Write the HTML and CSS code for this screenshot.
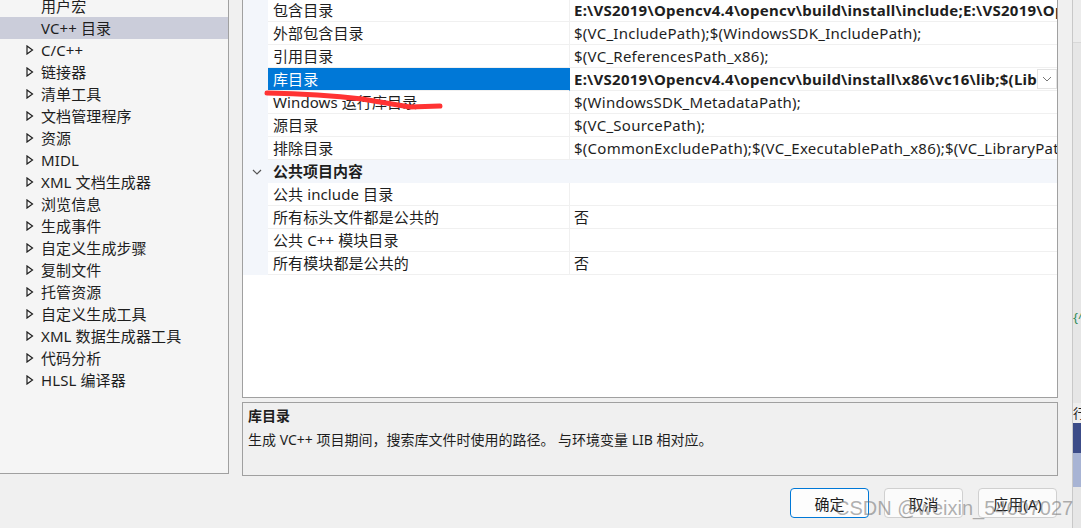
FILE: index.html
```html
<!DOCTYPE html>
<html lang="zh-CN">
<head>
<meta charset="utf-8">
<title>属性页</title>
<link rel="stylesheet" href="styles.css">
</head>
<body>
<div class="window">
  <div class="main">
    <div class="top">
      <div class="tree">
        <ul class="tree-list">
          <li class="node leaf">用户宏</li>
          <li class="node leaf selected">VC++ 目录</li>
          <li class="node"><svg class="tri" width="8" height="10" viewBox="0 0 8 10"><polygon points="1,1 6.5,5 1,9" /></svg>C/C++</li>
          <li class="node"><svg class="tri" width="8" height="10" viewBox="0 0 8 10"><polygon points="1,1 6.5,5 1,9" /></svg>链接器</li>
          <li class="node"><svg class="tri" width="8" height="10" viewBox="0 0 8 10"><polygon points="1,1 6.5,5 1,9" /></svg>清单工具</li>
          <li class="node"><svg class="tri" width="8" height="10" viewBox="0 0 8 10"><polygon points="1,1 6.5,5 1,9" /></svg>文档管理程序</li>
          <li class="node"><svg class="tri" width="8" height="10" viewBox="0 0 8 10"><polygon points="1,1 6.5,5 1,9" /></svg>资源</li>
          <li class="node"><svg class="tri" width="8" height="10" viewBox="0 0 8 10"><polygon points="1,1 6.5,5 1,9" /></svg>MIDL</li>
          <li class="node"><svg class="tri" width="8" height="10" viewBox="0 0 8 10"><polygon points="1,1 6.5,5 1,9" /></svg>XML 文档生成器</li>
          <li class="node"><svg class="tri" width="8" height="10" viewBox="0 0 8 10"><polygon points="1,1 6.5,5 1,9" /></svg>浏览信息</li>
          <li class="node"><svg class="tri" width="8" height="10" viewBox="0 0 8 10"><polygon points="1,1 6.5,5 1,9" /></svg>生成事件</li>
          <li class="node"><svg class="tri" width="8" height="10" viewBox="0 0 8 10"><polygon points="1,1 6.5,5 1,9" /></svg>自定义生成步骤</li>
          <li class="node"><svg class="tri" width="8" height="10" viewBox="0 0 8 10"><polygon points="1,1 6.5,5 1,9" /></svg>复制文件</li>
          <li class="node"><svg class="tri" width="8" height="10" viewBox="0 0 8 10"><polygon points="1,1 6.5,5 1,9" /></svg>托管资源</li>
          <li class="node"><svg class="tri" width="8" height="10" viewBox="0 0 8 10"><polygon points="1,1 6.5,5 1,9" /></svg>自定义生成工具</li>
          <li class="node"><svg class="tri" width="8" height="10" viewBox="0 0 8 10"><polygon points="1,1 6.5,5 1,9" /></svg>XML 数据生成器工具</li>
          <li class="node"><svg class="tri" width="8" height="10" viewBox="0 0 8 10"><polygon points="1,1 6.5,5 1,9" /></svg>代码分析</li>
          <li class="node"><svg class="tri" width="8" height="10" viewBox="0 0 8 10"><polygon points="1,1 6.5,5 1,9" /></svg>HLSL 编译器</li>
        </ul>
      </div>
      <div class="right">
        <div class="grid">
          <div class="rows">
            <div class="row"><div class="gutter"></div><div class="name">包含目录</div><div class="value bold">E:\VS2019\Opencv4.4\opencv\build\install\include;E:\VS2019\Opencv4.4\opencv\build\install\include\opencv2;$(IncludePath)</div></div>
            <div class="row"><div class="gutter"></div><div class="name">外部包含目录</div><div class="value">$(VC_IncludePath);$(WindowsSDK_IncludePath);</div></div>
            <div class="row"><div class="gutter"></div><div class="name">引用目录</div><div class="value">$(VC_ReferencesPath_x86);</div></div>
            <div class="row active"><div class="gutter"></div><div class="name">库目录</div><div class="value bold"><span class="vtext">E:\VS2019\Opencv4.4\opencv\build\install\x86\vc16\lib;$(LibraryPath)</span><span class="drop"><svg width="10" height="6" viewBox="0 0 10 6"><polyline points="1,1 5,5 9,1" /></svg></span></div></div>
            <div class="row"><div class="gutter"></div><div class="name">Windows 运行库目录</div><div class="value">$(WindowsSDK_MetadataPath);</div></div>
            <div class="row"><div class="gutter"></div><div class="name">源目录</div><div class="value">$(VC_SourcePath);</div></div>
            <div class="row"><div class="gutter"></div><div class="name">排除目录</div><div class="value">$(CommonExcludePath);$(VC_ExecutablePath_x86);$(VC_LibraryPath_x86)</div></div>
            <div class="row category"><div class="gutter"><svg width="10" height="6" viewBox="0 0 10 6"><polyline points="1,1 5,5 9,1" /></svg></div><div class="cat-name">公共项目内容</div></div>
            <div class="row"><div class="gutter"></div><div class="name">公共 include 目录</div><div class="value"></div></div>
            <div class="row"><div class="gutter"></div><div class="name">所有标头文件都是公共的</div><div class="value">否</div></div>
            <div class="row"><div class="gutter"></div><div class="name">公共 C++ 模块目录</div><div class="value"></div></div>
            <div class="row"><div class="gutter"></div><div class="name">所有模块都是公共的</div><div class="value">否</div></div>
          </div>
        </div>
        <div class="desc">
          <div class="desc-title">库目录</div>
          <div class="desc-text">生成 VC++ 项目期间，搜索库文件时使用的路径。 与环境变量 LIB 相对应。</div>
        </div>
      </div>
    </div>
    <div class="buttons">
      <button class="btn default">确定</button>
      <button class="btn">取消</button>
      <button class="btn">应用(A)</button>
    </div>
  </div>
  <div class="bgwin">
    <div class="bg-top"></div>
    <div class="bg-code">{^</div>
    <div class="bg-line">行</div>
    <div class="bg-dark"></div>
    <div class="bg-light"></div>
  </div>
</div>
<svg class="scribble" width="1081" height="528" viewBox="0 0 1081 528"><path d="M267,93 Q320,94 362,99 Q392,104 410,107 L440,106" /></svg>
<div class="watermark">CSDN @weixin_54607027</div>
</body>
</html>
```

FILE: styles.css
```css
* { box-sizing: border-box; }
html, body {
  margin: 0;
  padding: 0;
}
body {
  width: 1081px;
  height: 528px;
  overflow: hidden;
  background: #f0f0f0;
  font-family: "Noto Sans", "Noto Sans CJK SC", sans-serif;
  font-size: 15px;
  color: #1e1e1e;
  position: relative;
}
.window {
  display: flex;
  height: 528px;
}
.main {
  width: 1072px;
  display: flex;
  flex-direction: column;
}
.top {
  display: flex;
  height: 476px;
}
.tree {
  width: 229px;
  height: 474px;
  background: #f5f5f5;
  border-right: 1px solid #a0a0a0;
  border-bottom: 1px solid #a0a0a0;
  overflow: hidden;
}
.tree-list {
  list-style: none;
  margin: -5px 0 0 0;
  padding: 0;
}
.node {
  height: 22px;
  line-height: 22px;
  display: flex;
  align-items: center;
  padding-left: 26px;
  white-space: nowrap;
  letter-spacing: 0.1px;
}
.node.leaf { padding-left: 41px; }
.node.selected { background: #cbcdda; }
.tri {
  margin-right: 7px;
  flex: none;
}
.tri polygon {
  fill: none;
  stroke: #1e1e1e;
  stroke-width: 1.2;
}
.right {
  margin-left: 13px;
  width: 816px;
  display: flex;
  flex-direction: column;
}
.grid {
  height: 398px;
  background: #ffffff;
  border-left: 1px solid #a0a0a0;
  border-right: 1px solid #a0a0a0;
  border-bottom: 1px solid #a0a0a0;
  overflow: hidden;
}
.rows { margin-top: -1px; }
.row {
  display: flex;
  height: 23px;
  line-height: 22px;
}
.gutter {
  width: 25px;
  flex: none;
  background: #f3f6fb;
  display: flex;
  align-items: center;
  padding-left: 9px;
}
.gutter polyline, .drop polyline {
  fill: none;
  stroke: #555;
  stroke-width: 1.2;
}
.name {
  width: 302px;
  flex: none;
  padding-left: 5px;
  border-right: 1px solid #f0f0f0;
  border-bottom: 1px solid #f0f0f0;
  white-space: nowrap;
  overflow: hidden;
  letter-spacing: 0.1px;
}
.value {
  flex: 1;
  min-width: 0;
  padding-left: 4px;
  border-bottom: 1px solid #f0f0f0;
  white-space: nowrap;
  overflow: hidden;
  display: flex;
  letter-spacing: 0.25px;
}
.bold { font-weight: 700; }
.vtext {
  flex: 1;
  min-width: 0;
  overflow: hidden;
}
.row.active .name {
  background: #0078d7;
  color: #ffffff;
  border-right-color: #0078d7;
}
.drop {
  flex: none;
  width: 20px;
  height: 20px;
  margin-top: 1px;
  border: 1px solid #e3e3e3;
  background: #fff;
  display: flex;
  align-items: center;
  justify-content: center;
}
.drop polyline { stroke: #777; stroke-width: 1; }
.row.category {
  background: #f3f6fb;
}
.cat-name {
  padding-left: 5px;
  font-weight: 700;
}
.desc {
  margin-top: 4px;
  height: 74px;
  border: 1px solid #a0a0a0;
  background: #f0f0f0;
  padding: 2px 5px;
  font-size: 14px;
}
.desc-title {
  font-weight: 700;
  line-height: 22px;
}
.desc-text {
  margin-top: 2px;
  line-height: 22px;
}
.buttons {
  display: flex;
  justify-content: flex-end;
  gap: 15px;
  padding-top: 12px;
  padding-right: 15px;
}
.btn {
  width: 79px;
  height: 30px;
  font-family: "Noto Sans", "Noto Sans CJK SC", sans-serif;
  font-size: 15px;
  color: #1e1e1e;
  background: #fbfbfb;
  border: 1px solid #d0d0d0;
  border-radius: 4px;
  padding: 0;
}
.btn.default {
  border: 1px solid #0078d7;
  background: #fdfdfd;
}
.bgwin {
  width: 9px;
  border-left: 1px solid #c8c8c8;
  background: #e6e6e6;
  display: flex;
  flex-direction: column;
  overflow: hidden;
}
.bg-top {
  height: 43px;
  background: #ececec;
  border-bottom: 1px solid #d8d8d8;
}
.bg-code {
  margin-top: 264px;
  height: 20px;
  font-size: 13px;
  line-height: 20px;
  color: #2e8b57;
  white-space: nowrap;
}
.bg-line {
  margin-top: 76px;
  height: 20px;
  font-size: 13px;
  line-height: 20px;
  background: #eeeeee;
  white-space: nowrap;
}
.bg-dark {
  height: 30px;
  background: #3c4c88;
}
.bg-light {
  height: 34px;
  background: #a8b4d4;
}
.scribble {
  position: absolute;
  left: 0;
  top: 0;
  pointer-events: none;
}
.scribble path {
  fill: none;
  stroke: #ff3333;
  stroke-width: 5;
  stroke-linecap: round;
  stroke-linejoin: round;
}
.watermark {
  position: absolute;
  left: 835px;
  top: 495px;
  font-family: "Liberation Sans", sans-serif;
  font-size: 20px;
  line-height: 26px;
  color: rgba(110, 110, 110, 0.55);
  white-space: nowrap;
  pointer-events: none;
}
```
